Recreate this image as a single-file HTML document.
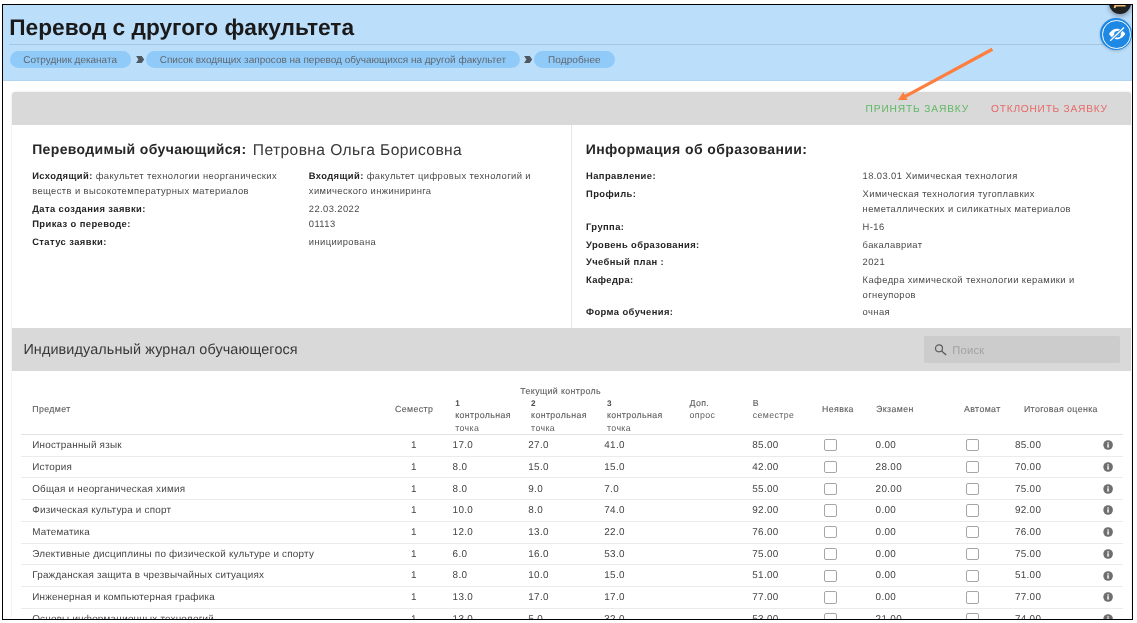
<!DOCTYPE html>
<html><head><meta charset="utf-8"><style>
html,body{margin:0;padding:0;width:1137px;height:623px;overflow:hidden;background:#fff;}
body{font-family:"Liberation Sans", sans-serif;position:relative;text-rendering:geometricPrecision;}
#clip{will-change:transform;position:absolute;left:0;top:0;width:1137px;height:623px;clip-path:inset(5px 4.5px 4.3px 3px);}
.t{position:absolute;white-space:nowrap;}
.r{position:absolute;box-sizing:border-box;}
#frame{position:absolute;left:2px;top:3.9px;width:1131.2px;height:616px;border:1.2px solid #000;box-sizing:border-box;}
</style></head><body>
<div id="clip">
<div class="r" style="left:3.00px;top:5.00px;width:1129.00px;height:75.70px;background:#bbdefb;"></div>
<div class="r" style="left:3.00px;top:79.70px;width:1129.00px;height:1.00px;background:#b2d4f0;"></div>
<div class="t" style="left:9.30px;top:13px;font-size:22.7px;line-height:28.38px;color:#1a1a1a;font-weight:bold;">Перевод с другого факультета</div>
<div class="r" style="left:9.00px;top:43.80px;width:1095.00px;height:1.00px;background:#a6c6e0;"></div>
<div class="r" style="left:9.50px;top:51.00px;width:121.50px;height:16.70px;background:#90caf9;border-radius:8.5px;"></div>
<div class="t" style="left:23.20px;top:55px;font-size:10px;line-height:12.5px;color:#62686e;">Сотрудник деканата</div>
<div class="r" style="left:146.00px;top:51.00px;width:374.00px;height:16.70px;background:#90caf9;border-radius:8.5px;"></div>
<div class="t" style="left:159.70px;top:55px;font-size:10px;line-height:12.5px;color:#62686e;">Список входящих запросов на перевод обучающихся на другой факультет</div>
<div class="r" style="left:534.40px;top:51.00px;width:80.30px;height:16.70px;background:#90caf9;border-radius:8.5px;"></div>
<div class="t" style="left:548.10px;top:55px;font-size:10px;line-height:12.5px;color:#62686e;letter-spacing:0.08px;">Подробнее</div>
<svg class="r" style="left:136.00px;top:55px" width="9" height="9" viewBox="0 0 9 9"><path d="M0.1 0.9 L5.7 0.9 L8.2 4.4 L5.7 7.9 L0.1 7.9 L2.4 4.4 Z" fill="#4d5862"/></svg>
<svg class="r" style="left:524.00px;top:55px" width="9" height="9" viewBox="0 0 9 9"><path d="M0.1 0.9 L5.7 0.9 L8.2 4.4 L5.7 7.9 L0.1 7.9 L2.4 4.4 Z" fill="#4d5862"/></svg>
<div class="r" style="left:1109px;top:-8.3px;width:21.8px;height:21.8px;border-radius:50%;background:#222;box-shadow:0 2px 5px rgba(0,0,0,0.35)"></div>
<svg class="r" style="left:1112px;top:4px" width="16" height="6" viewBox="0 0 16 6"><path d="M2.6 4 L3.3 1.6 L13.6 1.6" stroke="#f3bd72" stroke-width="2" fill="none"/></svg>
<div class="r" style="left:1100.4px;top:18.25px;width:32px;height:32px;border-radius:50%;background:#1e88e5;box-shadow:0 1px 3px rgba(0,0,0,0.2)"></div>
<div class="r" style="left:1102.2px;top:19.95px;width:28.6px;height:28.6px;border-radius:50%;border:1.4px solid #fff;"></div>
<svg class="r" style="left:1106px;top:24px" width="22" height="20" viewBox="0 0 22 20"><path d="M3 10 C5.5 6 8.5 4.8 11 4.8 C13.5 4.8 16.5 6 19.4 10 C16.5 14 13.5 15.2 11 15.2 C8.5 15.2 5.5 14 3 10 Z" fill="#fff"/><circle cx="11.5" cy="10.2" r="3.3" fill="#1e88e5"/><circle cx="11.5" cy="10.2" r="1.6" fill="#fff"/><path d="M18 3.5 L4.2 16.8" stroke="#1e88e5" stroke-width="3"/><path d="M18 3.5 L4.2 16.8" stroke="#fff" stroke-width="1.3"/></svg>
<div class="r" style="left:12px;top:92px;width:1119px;height:560px;background:#fff;border-radius:3px;box-shadow:0 0 2px rgba(0,0,0,0.16)"></div>
<div class="r" style="left:12.00px;top:92.00px;width:1119.00px;height:32.60px;background:#d9d9d9;border-radius:3px 3px 0 0;"></div>
<div class="t" style="left:865.60px;top:104px;font-size:10.2px;line-height:12.75px;color:#5fb864;letter-spacing:0.85px;">ПРИНЯТЬ ЗАЯВКУ</div>
<div class="t" style="left:991.10px;top:104px;font-size:10.2px;line-height:12.75px;color:#e86a6a;letter-spacing:0.74px;">ОТКЛОНИТЬ ЗАЯВКУ</div>
<div class="r" style="left:571.00px;top:124.60px;width:1.00px;height:203.20px;background:#e8e8e8;"></div>
<div class="t" style="left:32.20px;top:141px;font-size:14px;line-height:17.5px;color:#262626;font-weight:bold;letter-spacing:0.36px;">Переводимый обучающийся:</div>
<div class="t" style="left:252.80px;top:141px;font-size:15.6px;line-height:19.5px;color:#383838;letter-spacing:0.4px;">Петровна Ольга Борисовна</div>
<div class="t" style="left:32.20px;top:170px;font-size:9.4px;line-height:11.75px;color:#4a4a4a;letter-spacing:0.41px;"><b style="color:#242424">Исходящий:</b> факультет технологии неорганических</div>
<div class="t" style="left:32.20px;top:185px;font-size:9.4px;line-height:11.75px;color:#4a4a4a;letter-spacing:0.41px;">веществ и высокотемпературных материалов</div>
<div class="t" style="left:32.20px;top:203px;font-size:9.4px;line-height:11.75px;color:#4a4a4a;letter-spacing:0.41px;"><b style="color:#242424">Дата создания заявки:</b> </div>
<div class="t" style="left:32.20px;top:218px;font-size:9.4px;line-height:11.75px;color:#4a4a4a;letter-spacing:0.41px;"><b style="color:#242424">Приказ о переводе:</b> </div>
<div class="t" style="left:32.20px;top:236px;font-size:9.4px;line-height:11.75px;color:#4a4a4a;letter-spacing:0.41px;"><b style="color:#242424">Статус заявки:</b> </div>
<div class="t" style="left:308.80px;top:170px;font-size:9.4px;line-height:11.75px;color:#4a4a4a;letter-spacing:0.41px;"><b style="color:#242424">Входящий:</b> факультет цифровых технологий и</div>
<div class="t" style="left:308.80px;top:185px;font-size:9.4px;line-height:11.75px;color:#4a4a4a;letter-spacing:0.41px;">химического инжиниринга</div>
<div class="t" style="left:308.80px;top:203px;font-size:9.4px;line-height:11.75px;color:#4a4a4a;letter-spacing:0.41px;">22.03.2022</div>
<div class="t" style="left:308.80px;top:218px;font-size:9.4px;line-height:11.75px;color:#4a4a4a;letter-spacing:0.41px;">01113</div>
<div class="t" style="left:308.80px;top:236px;font-size:9.4px;line-height:11.75px;color:#4a4a4a;letter-spacing:0.41px;">инициирована</div>
<div class="t" style="left:585.80px;top:141px;font-size:14px;line-height:17.5px;color:#262626;font-weight:bold;letter-spacing:0.4px;">Информация об образовании:</div>
<div class="t" style="left:586.00px;top:170px;font-size:9.4px;line-height:11.75px;color:#4a4a4a;letter-spacing:0.41px;"><b style="color:#242424">Направление:</b> </div>
<div class="t" style="left:862.60px;top:170px;font-size:9.4px;line-height:11.75px;color:#4a4a4a;letter-spacing:0.41px;">18.03.01 Химическая технология</div>
<div class="t" style="left:586.00px;top:188px;font-size:9.4px;line-height:11.75px;color:#4a4a4a;letter-spacing:0.41px;"><b style="color:#242424">Профиль:</b> </div>
<div class="t" style="left:862.60px;top:188px;font-size:9.4px;line-height:11.75px;color:#4a4a4a;letter-spacing:0.41px;">Химическая технология тугоплавких</div>
<div class="t" style="left:862.60px;top:203px;font-size:9.4px;line-height:11.75px;color:#4a4a4a;letter-spacing:0.41px;">неметаллических и силикатных материалов</div>
<div class="t" style="left:586.00px;top:221px;font-size:9.4px;line-height:11.75px;color:#4a4a4a;letter-spacing:0.41px;"><b style="color:#242424">Группа:</b> </div>
<div class="t" style="left:862.60px;top:221px;font-size:9.4px;line-height:11.75px;color:#4a4a4a;letter-spacing:0.41px;">Н-16</div>
<div class="t" style="left:586.00px;top:239px;font-size:9.4px;line-height:11.75px;color:#4a4a4a;letter-spacing:0.41px;"><b style="color:#242424">Уровень образования:</b> </div>
<div class="t" style="left:862.60px;top:239px;font-size:9.4px;line-height:11.75px;color:#4a4a4a;letter-spacing:0.41px;">бакалавриат</div>
<div class="t" style="left:586.00px;top:256px;font-size:9.4px;line-height:11.75px;color:#4a4a4a;letter-spacing:0.41px;"><b style="color:#242424">Учебный план :</b> </div>
<div class="t" style="left:862.60px;top:256px;font-size:9.4px;line-height:11.75px;color:#4a4a4a;letter-spacing:0.41px;">2021</div>
<div class="t" style="left:586.00px;top:274px;font-size:9.4px;line-height:11.75px;color:#4a4a4a;letter-spacing:0.41px;"><b style="color:#242424">Кафедра:</b> </div>
<div class="t" style="left:862.60px;top:274px;font-size:9.4px;line-height:11.75px;color:#4a4a4a;letter-spacing:0.41px;">Кафедра химической технологии керамики и</div>
<div class="t" style="left:862.60px;top:289px;font-size:9.4px;line-height:11.75px;color:#4a4a4a;letter-spacing:0.41px;">огнеупоров</div>
<div class="t" style="left:586.00px;top:306px;font-size:9.4px;line-height:11.75px;color:#4a4a4a;letter-spacing:0.41px;"><b style="color:#242424">Форма обучения:</b> </div>
<div class="t" style="left:862.60px;top:306px;font-size:9.4px;line-height:11.75px;color:#4a4a4a;letter-spacing:0.41px;">очная</div>
<div class="r" style="left:12.00px;top:327.80px;width:1119.00px;height:42.80px;background:#d9d9d9;"></div>
<div class="t" style="left:23.40px;top:341px;font-size:14.4px;line-height:18.0px;color:#383838;letter-spacing:0.12px;">Индивидуальный журнал обучающегося</div>
<div class="r" style="left:924.10px;top:336.20px;width:195.50px;height:26.40px;background:#cccccc;border-radius:2px;"></div>
<svg class="r" style="left:932px;top:341px" width="18" height="18" viewBox="0 0 18 18"><circle cx="7" cy="7.3" r="3.5" stroke="#5c5c5c" stroke-width="1.2" fill="none"/><path d="M9.6 9.9 L14.2 14.1" stroke="#5c5c5c" stroke-width="1.35"/></svg>
<div class="t" style="left:952.20px;top:344px;font-size:11.2px;line-height:14.0px;color:#a2a2a2;letter-spacing:0.25px;">Поиск</div>
<div class="t" style="left:32.20px;top:404px;font-size:8.8px;line-height:11.0px;color:#5e5e5e;letter-spacing:0.38px;-webkit-text-stroke:0.12px #5e5e5e;">Предмет</div>
<div class="t" style="left:395.00px;top:404px;font-size:8.8px;line-height:11.0px;color:#5e5e5e;letter-spacing:0.38px;-webkit-text-stroke:0.12px #5e5e5e;">Семестр</div>
<div class="t" style="left:520.30px;top:386px;font-size:8.8px;line-height:11.0px;color:#5e5e5e;letter-spacing:0.38px;-webkit-text-stroke:0.12px #5e5e5e;">Текущий контроль</div>
<div class="t" style="left:455.20px;top:399px;font-size:8.2px;line-height:10.25px;color:#4a4a4a;font-weight:bold;letter-spacing:0.37px;">1</div>
<div class="t" style="left:455.20px;top:410px;font-size:8.8px;line-height:11.0px;color:#5e5e5e;letter-spacing:0.38px;-webkit-text-stroke:0.12px #5e5e5e;">контрольная</div>
<div class="t" style="left:455.20px;top:423px;font-size:8.8px;line-height:11.0px;color:#5e5e5e;letter-spacing:0.38px;">точка</div>
<div class="t" style="left:531.10px;top:399px;font-size:8.2px;line-height:10.25px;color:#4a4a4a;font-weight:bold;letter-spacing:0.37px;">2</div>
<div class="t" style="left:531.10px;top:410px;font-size:8.8px;line-height:11.0px;color:#5e5e5e;letter-spacing:0.38px;-webkit-text-stroke:0.12px #5e5e5e;">контрольная</div>
<div class="t" style="left:531.10px;top:423px;font-size:8.8px;line-height:11.0px;color:#5e5e5e;letter-spacing:0.38px;">точка</div>
<div class="t" style="left:607.00px;top:399px;font-size:8.2px;line-height:10.25px;color:#4a4a4a;font-weight:bold;letter-spacing:0.37px;">3</div>
<div class="t" style="left:607.00px;top:410px;font-size:8.8px;line-height:11.0px;color:#5e5e5e;letter-spacing:0.38px;-webkit-text-stroke:0.12px #5e5e5e;">контрольная</div>
<div class="t" style="left:607.00px;top:423px;font-size:8.8px;line-height:11.0px;color:#5e5e5e;letter-spacing:0.38px;">точка</div>
<div class="t" style="left:689.50px;top:398px;font-size:8.8px;line-height:11.0px;color:#5e5e5e;letter-spacing:0.38px;-webkit-text-stroke:0.12px #5e5e5e;">Доп.</div>
<div class="t" style="left:689.50px;top:410px;font-size:8.8px;line-height:11.0px;color:#5e5e5e;letter-spacing:0.38px;">опрос</div>
<div class="t" style="left:752.80px;top:398px;font-size:8.8px;line-height:11.0px;color:#5e5e5e;letter-spacing:0.38px;-webkit-text-stroke:0.12px #5e5e5e;">В</div>
<div class="t" style="left:752.80px;top:410px;font-size:8.8px;line-height:11.0px;color:#5e5e5e;letter-spacing:0.38px;">семестре</div>
<div class="t" style="left:822.00px;top:404px;font-size:8.8px;line-height:11.0px;color:#5e5e5e;letter-spacing:0.38px;-webkit-text-stroke:0.12px #5e5e5e;">Неявка</div>
<div class="t" style="left:876.00px;top:404px;font-size:8.8px;line-height:11.0px;color:#5e5e5e;letter-spacing:0.38px;-webkit-text-stroke:0.12px #5e5e5e;">Экзамен</div>
<div class="t" style="left:964.00px;top:404px;font-size:8.8px;line-height:11.0px;color:#5e5e5e;letter-spacing:0.38px;-webkit-text-stroke:0.12px #5e5e5e;">Автомат</div>
<div class="t" style="left:1023.90px;top:404px;font-size:8.8px;line-height:11.0px;color:#5e5e5e;letter-spacing:0.38px;-webkit-text-stroke:0.12px #5e5e5e;">Итоговая оценка</div>
<div class="r" style="left:21.00px;top:433.80px;width:1102.00px;height:1.00px;background:#e2e2e2;"></div>
<div class="t" style="left:32.20px;top:440px;font-size:9.9px;line-height:12.38px;color:#444;letter-spacing:0.22px;">Иностранный язык</div>
<div class="t" style="left:410.90px;top:440px;font-size:9.9px;line-height:12.38px;color:#444;letter-spacing:0.33px;">1</div>
<div class="t" style="left:452.60px;top:440px;font-size:9.9px;line-height:12.38px;color:#444;letter-spacing:0.33px;">17.0</div>
<div class="t" style="left:528.30px;top:440px;font-size:9.9px;line-height:12.38px;color:#444;letter-spacing:0.33px;">27.0</div>
<div class="t" style="left:604.30px;top:440px;font-size:9.9px;line-height:12.38px;color:#444;letter-spacing:0.33px;">41.0</div>
<div class="t" style="left:752.30px;top:440px;font-size:9.9px;line-height:12.38px;color:#444;letter-spacing:0.33px;">85.00</div>
<div class="t" style="left:875.60px;top:440px;font-size:9.9px;line-height:12.38px;color:#444;letter-spacing:0.33px;">0.00</div>
<div class="t" style="left:1014.90px;top:440px;font-size:9.9px;line-height:12.38px;color:#444;letter-spacing:0.33px;">85.00</div>
<div class="r" style="left:824.20px;top:439.10px;width:12.6px;height:12.3px;border:1.5px solid #a6a6a6;border-radius:2px"></div>
<div class="r" style="left:966.30px;top:439.10px;width:12.6px;height:12.3px;border:1.5px solid #a6a6a6;border-radius:2px"></div>
<svg class="r" style="left:1102px;top:439.15px" width="12" height="12" viewBox="0 0 12 12"><circle cx="6.1" cy="6" r="4.8" fill="#6e6e6e"/><rect x="5.15" y="3.3" width="1.9" height="1.3" fill="#e0e0e0"/><rect x="5.15" y="5.2" width="1.9" height="3.4" fill="#e0e0e0"/></svg>
<div class="r" style="left:21.00px;top:455.55px;width:1102.00px;height:1.00px;background:#ebebeb;"></div>
<div class="t" style="left:32.20px;top:462px;font-size:9.9px;line-height:12.38px;color:#444;letter-spacing:0.22px;">История</div>
<div class="t" style="left:410.90px;top:462px;font-size:9.9px;line-height:12.38px;color:#444;letter-spacing:0.33px;">1</div>
<div class="t" style="left:452.60px;top:462px;font-size:9.9px;line-height:12.38px;color:#444;letter-spacing:0.33px;">8.0</div>
<div class="t" style="left:528.30px;top:462px;font-size:9.9px;line-height:12.38px;color:#444;letter-spacing:0.33px;">15.0</div>
<div class="t" style="left:604.30px;top:462px;font-size:9.9px;line-height:12.38px;color:#444;letter-spacing:0.33px;">15.0</div>
<div class="t" style="left:752.30px;top:462px;font-size:9.9px;line-height:12.38px;color:#444;letter-spacing:0.33px;">42.00</div>
<div class="t" style="left:875.60px;top:462px;font-size:9.9px;line-height:12.38px;color:#444;letter-spacing:0.33px;">28.00</div>
<div class="t" style="left:1014.90px;top:462px;font-size:9.9px;line-height:12.38px;color:#444;letter-spacing:0.33px;">70.00</div>
<div class="r" style="left:824.20px;top:460.85px;width:12.6px;height:12.3px;border:1.5px solid #a6a6a6;border-radius:2px"></div>
<div class="r" style="left:966.30px;top:460.85px;width:12.6px;height:12.3px;border:1.5px solid #a6a6a6;border-radius:2px"></div>
<svg class="r" style="left:1102px;top:460.90px" width="12" height="12" viewBox="0 0 12 12"><circle cx="6.1" cy="6" r="4.8" fill="#6e6e6e"/><rect x="5.15" y="3.3" width="1.9" height="1.3" fill="#e0e0e0"/><rect x="5.15" y="5.2" width="1.9" height="3.4" fill="#e0e0e0"/></svg>
<div class="r" style="left:21.00px;top:477.30px;width:1102.00px;height:1.00px;background:#ebebeb;"></div>
<div class="t" style="left:32.20px;top:484px;font-size:9.9px;line-height:12.38px;color:#444;letter-spacing:0.22px;">Общая и неорганическая химия</div>
<div class="t" style="left:410.90px;top:484px;font-size:9.9px;line-height:12.38px;color:#444;letter-spacing:0.33px;">1</div>
<div class="t" style="left:452.60px;top:484px;font-size:9.9px;line-height:12.38px;color:#444;letter-spacing:0.33px;">8.0</div>
<div class="t" style="left:528.30px;top:484px;font-size:9.9px;line-height:12.38px;color:#444;letter-spacing:0.33px;">9.0</div>
<div class="t" style="left:604.30px;top:484px;font-size:9.9px;line-height:12.38px;color:#444;letter-spacing:0.33px;">7.0</div>
<div class="t" style="left:752.30px;top:484px;font-size:9.9px;line-height:12.38px;color:#444;letter-spacing:0.33px;">55.00</div>
<div class="t" style="left:875.60px;top:484px;font-size:9.9px;line-height:12.38px;color:#444;letter-spacing:0.33px;">20.00</div>
<div class="t" style="left:1014.90px;top:484px;font-size:9.9px;line-height:12.38px;color:#444;letter-spacing:0.33px;">75.00</div>
<div class="r" style="left:824.20px;top:482.60px;width:12.6px;height:12.3px;border:1.5px solid #a6a6a6;border-radius:2px"></div>
<div class="r" style="left:966.30px;top:482.60px;width:12.6px;height:12.3px;border:1.5px solid #a6a6a6;border-radius:2px"></div>
<svg class="r" style="left:1102px;top:482.65px" width="12" height="12" viewBox="0 0 12 12"><circle cx="6.1" cy="6" r="4.8" fill="#6e6e6e"/><rect x="5.15" y="3.3" width="1.9" height="1.3" fill="#e0e0e0"/><rect x="5.15" y="5.2" width="1.9" height="3.4" fill="#e0e0e0"/></svg>
<div class="r" style="left:21.00px;top:499.05px;width:1102.00px;height:1.00px;background:#ebebeb;"></div>
<div class="t" style="left:32.20px;top:505px;font-size:9.9px;line-height:12.38px;color:#444;letter-spacing:0.22px;">Физическая культура и спорт</div>
<div class="t" style="left:410.90px;top:505px;font-size:9.9px;line-height:12.38px;color:#444;letter-spacing:0.33px;">1</div>
<div class="t" style="left:452.60px;top:505px;font-size:9.9px;line-height:12.38px;color:#444;letter-spacing:0.33px;">10.0</div>
<div class="t" style="left:528.30px;top:505px;font-size:9.9px;line-height:12.38px;color:#444;letter-spacing:0.33px;">8.0</div>
<div class="t" style="left:604.30px;top:505px;font-size:9.9px;line-height:12.38px;color:#444;letter-spacing:0.33px;">74.0</div>
<div class="t" style="left:752.30px;top:505px;font-size:9.9px;line-height:12.38px;color:#444;letter-spacing:0.33px;">92.00</div>
<div class="t" style="left:875.60px;top:505px;font-size:9.9px;line-height:12.38px;color:#444;letter-spacing:0.33px;">0.00</div>
<div class="t" style="left:1014.90px;top:505px;font-size:9.9px;line-height:12.38px;color:#444;letter-spacing:0.33px;">92.00</div>
<div class="r" style="left:824.20px;top:504.35px;width:12.6px;height:12.3px;border:1.5px solid #a6a6a6;border-radius:2px"></div>
<div class="r" style="left:966.30px;top:504.35px;width:12.6px;height:12.3px;border:1.5px solid #a6a6a6;border-radius:2px"></div>
<svg class="r" style="left:1102px;top:504.40px" width="12" height="12" viewBox="0 0 12 12"><circle cx="6.1" cy="6" r="4.8" fill="#6e6e6e"/><rect x="5.15" y="3.3" width="1.9" height="1.3" fill="#e0e0e0"/><rect x="5.15" y="5.2" width="1.9" height="3.4" fill="#e0e0e0"/></svg>
<div class="r" style="left:21.00px;top:520.80px;width:1102.00px;height:1.00px;background:#ebebeb;"></div>
<div class="t" style="left:32.20px;top:527px;font-size:9.9px;line-height:12.38px;color:#444;letter-spacing:0.22px;">Математика</div>
<div class="t" style="left:410.90px;top:527px;font-size:9.9px;line-height:12.38px;color:#444;letter-spacing:0.33px;">1</div>
<div class="t" style="left:452.60px;top:527px;font-size:9.9px;line-height:12.38px;color:#444;letter-spacing:0.33px;">12.0</div>
<div class="t" style="left:528.30px;top:527px;font-size:9.9px;line-height:12.38px;color:#444;letter-spacing:0.33px;">13.0</div>
<div class="t" style="left:604.30px;top:527px;font-size:9.9px;line-height:12.38px;color:#444;letter-spacing:0.33px;">22.0</div>
<div class="t" style="left:752.30px;top:527px;font-size:9.9px;line-height:12.38px;color:#444;letter-spacing:0.33px;">76.00</div>
<div class="t" style="left:875.60px;top:527px;font-size:9.9px;line-height:12.38px;color:#444;letter-spacing:0.33px;">0.00</div>
<div class="t" style="left:1014.90px;top:527px;font-size:9.9px;line-height:12.38px;color:#444;letter-spacing:0.33px;">76.00</div>
<div class="r" style="left:824.20px;top:526.10px;width:12.6px;height:12.3px;border:1.5px solid #a6a6a6;border-radius:2px"></div>
<div class="r" style="left:966.30px;top:526.10px;width:12.6px;height:12.3px;border:1.5px solid #a6a6a6;border-radius:2px"></div>
<svg class="r" style="left:1102px;top:526.15px" width="12" height="12" viewBox="0 0 12 12"><circle cx="6.1" cy="6" r="4.8" fill="#6e6e6e"/><rect x="5.15" y="3.3" width="1.9" height="1.3" fill="#e0e0e0"/><rect x="5.15" y="5.2" width="1.9" height="3.4" fill="#e0e0e0"/></svg>
<div class="r" style="left:21.00px;top:542.55px;width:1102.00px;height:1.00px;background:#ebebeb;"></div>
<div class="t" style="left:32.20px;top:549px;font-size:9.9px;line-height:12.38px;color:#444;letter-spacing:0.22px;">Элективные дисциплины по физической культуре и спорту</div>
<div class="t" style="left:410.90px;top:549px;font-size:9.9px;line-height:12.38px;color:#444;letter-spacing:0.33px;">1</div>
<div class="t" style="left:452.60px;top:549px;font-size:9.9px;line-height:12.38px;color:#444;letter-spacing:0.33px;">6.0</div>
<div class="t" style="left:528.30px;top:549px;font-size:9.9px;line-height:12.38px;color:#444;letter-spacing:0.33px;">16.0</div>
<div class="t" style="left:604.30px;top:549px;font-size:9.9px;line-height:12.38px;color:#444;letter-spacing:0.33px;">53.0</div>
<div class="t" style="left:752.30px;top:549px;font-size:9.9px;line-height:12.38px;color:#444;letter-spacing:0.33px;">75.00</div>
<div class="t" style="left:875.60px;top:549px;font-size:9.9px;line-height:12.38px;color:#444;letter-spacing:0.33px;">0.00</div>
<div class="t" style="left:1014.90px;top:549px;font-size:9.9px;line-height:12.38px;color:#444;letter-spacing:0.33px;">75.00</div>
<div class="r" style="left:824.20px;top:547.85px;width:12.6px;height:12.3px;border:1.5px solid #a6a6a6;border-radius:2px"></div>
<div class="r" style="left:966.30px;top:547.85px;width:12.6px;height:12.3px;border:1.5px solid #a6a6a6;border-radius:2px"></div>
<svg class="r" style="left:1102px;top:547.90px" width="12" height="12" viewBox="0 0 12 12"><circle cx="6.1" cy="6" r="4.8" fill="#6e6e6e"/><rect x="5.15" y="3.3" width="1.9" height="1.3" fill="#e0e0e0"/><rect x="5.15" y="5.2" width="1.9" height="3.4" fill="#e0e0e0"/></svg>
<div class="r" style="left:21.00px;top:564.30px;width:1102.00px;height:1.00px;background:#ebebeb;"></div>
<div class="t" style="left:32.20px;top:570px;font-size:9.9px;line-height:12.38px;color:#444;letter-spacing:0.22px;">Гражданская защита в чрезвычайных ситуациях</div>
<div class="t" style="left:410.90px;top:570px;font-size:9.9px;line-height:12.38px;color:#444;letter-spacing:0.33px;">1</div>
<div class="t" style="left:452.60px;top:570px;font-size:9.9px;line-height:12.38px;color:#444;letter-spacing:0.33px;">8.0</div>
<div class="t" style="left:528.30px;top:570px;font-size:9.9px;line-height:12.38px;color:#444;letter-spacing:0.33px;">10.0</div>
<div class="t" style="left:604.30px;top:570px;font-size:9.9px;line-height:12.38px;color:#444;letter-spacing:0.33px;">15.0</div>
<div class="t" style="left:752.30px;top:570px;font-size:9.9px;line-height:12.38px;color:#444;letter-spacing:0.33px;">51.00</div>
<div class="t" style="left:875.60px;top:570px;font-size:9.9px;line-height:12.38px;color:#444;letter-spacing:0.33px;">0.00</div>
<div class="t" style="left:1014.90px;top:570px;font-size:9.9px;line-height:12.38px;color:#444;letter-spacing:0.33px;">51.00</div>
<div class="r" style="left:824.20px;top:569.60px;width:12.6px;height:12.3px;border:1.5px solid #a6a6a6;border-radius:2px"></div>
<div class="r" style="left:966.30px;top:569.60px;width:12.6px;height:12.3px;border:1.5px solid #a6a6a6;border-radius:2px"></div>
<svg class="r" style="left:1102px;top:569.65px" width="12" height="12" viewBox="0 0 12 12"><circle cx="6.1" cy="6" r="4.8" fill="#6e6e6e"/><rect x="5.15" y="3.3" width="1.9" height="1.3" fill="#e0e0e0"/><rect x="5.15" y="5.2" width="1.9" height="3.4" fill="#e0e0e0"/></svg>
<div class="r" style="left:21.00px;top:586.05px;width:1102.00px;height:1.00px;background:#ebebeb;"></div>
<div class="t" style="left:32.20px;top:592px;font-size:9.9px;line-height:12.38px;color:#444;letter-spacing:0.22px;">Инженерная и компьютерная графика</div>
<div class="t" style="left:410.90px;top:592px;font-size:9.9px;line-height:12.38px;color:#444;letter-spacing:0.33px;">1</div>
<div class="t" style="left:452.60px;top:592px;font-size:9.9px;line-height:12.38px;color:#444;letter-spacing:0.33px;">13.0</div>
<div class="t" style="left:528.30px;top:592px;font-size:9.9px;line-height:12.38px;color:#444;letter-spacing:0.33px;">17.0</div>
<div class="t" style="left:604.30px;top:592px;font-size:9.9px;line-height:12.38px;color:#444;letter-spacing:0.33px;">17.0</div>
<div class="t" style="left:752.30px;top:592px;font-size:9.9px;line-height:12.38px;color:#444;letter-spacing:0.33px;">77.00</div>
<div class="t" style="left:875.60px;top:592px;font-size:9.9px;line-height:12.38px;color:#444;letter-spacing:0.33px;">0.00</div>
<div class="t" style="left:1014.90px;top:592px;font-size:9.9px;line-height:12.38px;color:#444;letter-spacing:0.33px;">77.00</div>
<div class="r" style="left:824.20px;top:591.35px;width:12.6px;height:12.3px;border:1.5px solid #a6a6a6;border-radius:2px"></div>
<div class="r" style="left:966.30px;top:591.35px;width:12.6px;height:12.3px;border:1.5px solid #a6a6a6;border-radius:2px"></div>
<svg class="r" style="left:1102px;top:591.40px" width="12" height="12" viewBox="0 0 12 12"><circle cx="6.1" cy="6" r="4.8" fill="#6e6e6e"/><rect x="5.15" y="3.3" width="1.9" height="1.3" fill="#e0e0e0"/><rect x="5.15" y="5.2" width="1.9" height="3.4" fill="#e0e0e0"/></svg>
<div class="r" style="left:21.00px;top:607.80px;width:1102.00px;height:1.00px;background:#ebebeb;"></div>
<div class="t" style="left:32.20px;top:614px;font-size:9.9px;line-height:12.38px;color:#444;letter-spacing:0.22px;">Основы информационных технологий</div>
<div class="t" style="left:410.90px;top:614px;font-size:9.9px;line-height:12.38px;color:#444;letter-spacing:0.33px;">1</div>
<div class="t" style="left:452.60px;top:614px;font-size:9.9px;line-height:12.38px;color:#444;letter-spacing:0.33px;">13.0</div>
<div class="t" style="left:528.30px;top:614px;font-size:9.9px;line-height:12.38px;color:#444;letter-spacing:0.33px;">5.0</div>
<div class="t" style="left:604.30px;top:614px;font-size:9.9px;line-height:12.38px;color:#444;letter-spacing:0.33px;">32.0</div>
<div class="t" style="left:752.30px;top:614px;font-size:9.9px;line-height:12.38px;color:#444;letter-spacing:0.33px;">53.00</div>
<div class="t" style="left:875.60px;top:614px;font-size:9.9px;line-height:12.38px;color:#444;letter-spacing:0.33px;">21.00</div>
<div class="t" style="left:1014.90px;top:614px;font-size:9.9px;line-height:12.38px;color:#444;letter-spacing:0.33px;">74.00</div>
<div class="r" style="left:824.20px;top:613.10px;width:12.6px;height:12.3px;border:1.5px solid #a6a6a6;border-radius:2px"></div>
<div class="r" style="left:966.30px;top:613.10px;width:12.6px;height:12.3px;border:1.5px solid #a6a6a6;border-radius:2px"></div>
<svg class="r" style="left:1102px;top:613.15px" width="12" height="12" viewBox="0 0 12 12"><circle cx="6.1" cy="6" r="4.8" fill="#6e6e6e"/><rect x="5.15" y="3.3" width="1.9" height="1.3" fill="#e0e0e0"/><rect x="5.15" y="5.2" width="1.9" height="3.4" fill="#e0e0e0"/></svg>
<div class="r" style="left:21.00px;top:629.55px;width:1102.00px;height:1.00px;background:#ebebeb;"></div>
<svg class="r" style="left:0;top:0" width="1137" height="623" viewBox="0 0 1137 623"><path d="M992.4 49.2 L903.5 97.4" stroke="#ff7f3f" stroke-width="3.3" stroke-linecap="butt"/><path d="M897.9 100.1 L903.3 92.1 L907.6 99.9 Z" fill="#ff7f3f"/></svg>
</div>
<div id="frame"></div>
</body></html>
